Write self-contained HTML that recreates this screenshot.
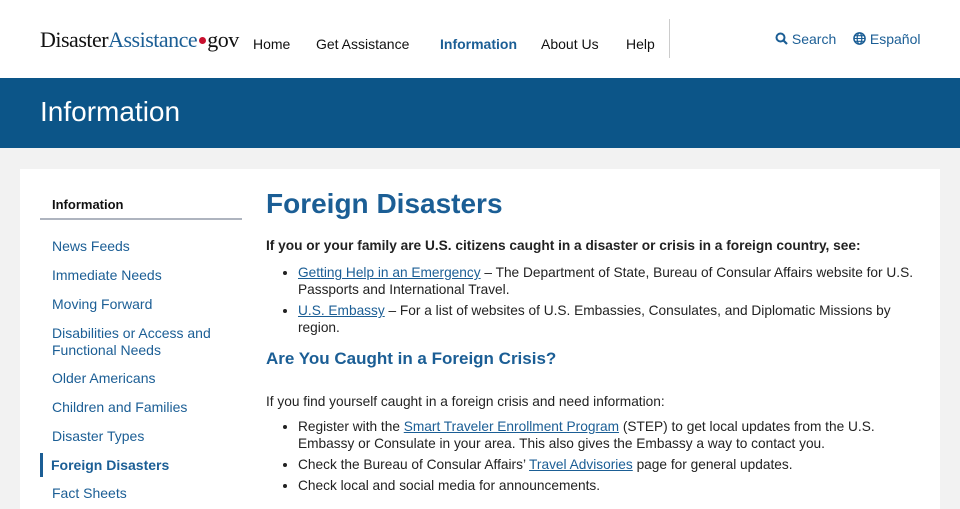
<!DOCTYPE html>
<html><head><meta charset="utf-8"><style>
*{margin:0;padding:0;box-sizing:border-box}
body{width:960px;height:492px;overflow:hidden;background:#f2f2f2;font-family:"Liberation Sans",Arial,sans-serif;color:#222;position:relative}
.hdr{position:absolute;left:0;top:0;width:960px;height:78px;background:#fff}
.abs{position:absolute;white-space:nowrap}
.logo{left:40px;top:27px;font-family:"Liberation Serif",serif;font-size:22px;letter-spacing:-0.5px;color:#111}
.logo .b{color:#1b5e95}
.logo .dot{display:inline-block;width:7px;height:7px;border-radius:50%;background:#c8102e;margin:0 1px 2px 2px;vertical-align:middle}
.nav{font-size:14px;top:36px;color:#111}
.band{position:absolute;left:0;top:78px;width:960px;height:70px;background:#0c5588}
.band h1{position:absolute;left:40px;top:18px;font-weight:normal;font-size:28px;color:#fff}
.card{position:absolute;left:20px;top:169px;width:920px;height:340px;background:#fff}
.side{font-size:14px;color:#1b5e95}
a{color:#1b5e95;text-decoration:underline}
.main{position:absolute;left:266px;font-size:13.7px;line-height:17px;color:#222}
ul{list-style:disc;padding-left:32px}
</style></head><body>
<div class="hdr"></div>
<div class="abs logo">Disaster<span class="b">Assistance</span><span class="dot"></span>gov</div>
<div class="abs nav" style="left:253px">Home</div>
<div class="abs nav" style="left:316px">Get Assistance</div>
<div class="abs nav" style="left:440px;color:#1b5e95;font-weight:bold">Information</div>
<div class="abs nav" style="left:541px">About Us</div>
<div class="abs nav" style="left:626px">Help</div>
<div class="abs" style="left:669px;top:19px;width:1px;height:39px;background:#ccc"></div>
<div class="abs" style="left:775px;top:31px;font-size:14px;color:#1b5e95"><svg width="13" height="13" viewBox="0 0 13 13" style="vertical-align:-1px"><circle cx="5.5" cy="5.5" r="4" fill="none" stroke="#1b5e95" stroke-width="2"/><path d="M8.5 8.5L12 12" stroke="#1b5e95" stroke-width="2.2"/></svg> Search</div>
<div class="abs" style="left:853px;top:31px;font-size:14px;color:#1b5e95"><svg width="13" height="13" viewBox="0 0 14 14" style="vertical-align:-1px"><circle cx="7" cy="7" r="6" fill="none" stroke="#1b5e95" stroke-width="1.6"/><ellipse cx="7" cy="7" rx="2.5" ry="6" fill="none" stroke="#1b5e95" stroke-width="1.3"/><path d="M1 7h12M2 4h10M2 10h10" stroke="#1b5e95" stroke-width="1.2"/></svg> Español</div>
<div class="band"><h1>Information</h1></div>
<div class="card"></div>
<div class="abs" style="left:52px;top:197px;font-size:13px;font-weight:bold;color:#111">Information</div>
<div class="abs" style="left:40px;top:218px;width:202px;height:2px;background:#aeb4bf"></div>
<div class="abs side" style="left:52px;top:238px">News Feeds</div>
<div class="abs side" style="left:52px;top:267px">Immediate Needs</div>
<div class="abs side" style="left:52px;top:296px">Moving Forward</div>
<div class="abs side" style="left:52px;top:325px;line-height:17px">Disabilities or Access and<br>Functional Needs</div>
<div class="abs side" style="left:52px;top:370px">Older Americans</div>
<div class="abs side" style="left:52px;top:399px">Children and Families</div>
<div class="abs side" style="left:52px;top:428px">Disaster Types</div>
<div class="abs" style="left:40px;top:453px;width:3px;height:24px;background:#1b5e95"></div>
<div class="abs side" style="left:51px;top:457px;font-weight:bold">Foreign Disasters</div>
<div class="abs side" style="left:52px;top:485px">Fact Sheets</div>
<div class="main" style="top:187px;font-size:28px;line-height:34px;font-weight:bold;color:#1b5e95">Foreign Disasters</div>
<div class="main" style="top:237px;font-weight:bold">If you or your family are U.S. citizens caught in a disaster or crisis in a foreign country, see:</div>
<div class="main" style="top:264px;width:650px"><ul>
<li><a>Getting Help in an Emergency</a> – The Department of State, Bureau of Consular Affairs website for U.S. Passports and International Travel.</li>
<li style="margin-top:4px"><a>U.S. Embassy</a> – For a list of websites of U.S. Embassies, Consulates, and Diplomatic Missions by region.</li></ul></div>
<div class="main" style="top:349px;font-size:17px;line-height:20px;font-weight:bold;color:#1b5e95">Are You Caught in a Foreign Crisis?</div>
<div class="main" style="top:393px">If you find yourself caught in a foreign crisis and need information:</div>
<div class="main" style="top:418px;width:620px"><ul>
<li>Register with the <a>Smart Traveler Enrollment Program</a> (STEP) to get local updates from the U.S. Embassy or Consulate in your area. This also gives the Embassy a way to contact you.</li>
<li style="margin-top:4px">Check the Bureau of Consular Affairs’ <a>Travel Advisories</a> page for general updates.</li>
<li style="margin-top:4px">Check local and social media for announcements.</li></ul></div>
</body></html>
